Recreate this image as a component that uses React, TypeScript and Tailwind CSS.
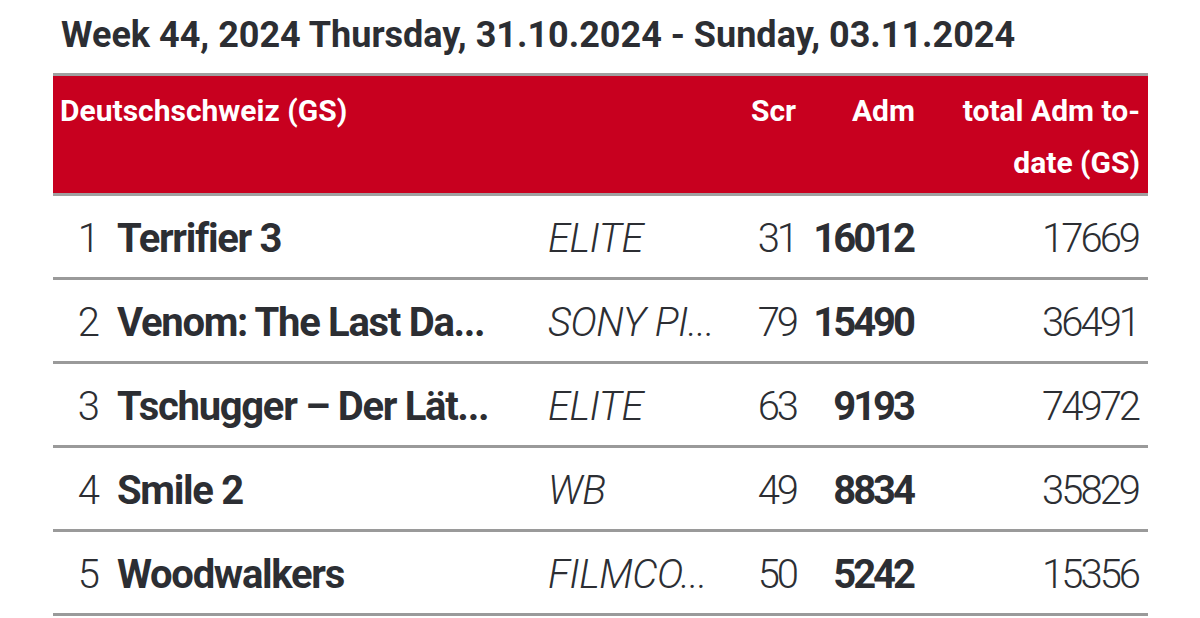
type Row = {
  rank: number;
  title: string;
  distributor: string;
  screens: number;
  admissions: number;
  total: number;
};

const rows: Row[] = [
  { rank: 1, title: "Terrifier 3", distributor: "ELITE", screens: 31, admissions: 16012, total: 17669 },
  { rank: 2, title: "Venom: The Last Da...", distributor: "SONY PI...", screens: 79, admissions: 15490, total: 36491 },
  { rank: 3, title: "Tschugger – Der Lät...", distributor: "ELITE", screens: 63, admissions: 9193, total: 74972 },
  { rank: 4, title: "Smile 2", distributor: "WB", screens: 49, admissions: 8834, total: 35829 },
  { rank: 5, title: "Woodwalkers", distributor: "FILMCO...", screens: 50, admissions: 5242, total: 15356 },
];

export default function App() {
  return (
    <div className="h-[618px] w-[1200px] overflow-hidden bg-white font-['Roboto','Liberation_Sans',sans-serif] text-[#2c2e33]">
      <h1 className="pl-[61px] pt-[13px] text-[36px] font-bold leading-[44px]">
        Week 44, 2024 Thursday, 31.10.2024 - Sunday, 03.11.2024
      </h1>

      <div className="ml-[53px] mt-[16px] w-[1095px]">
        {/* header */}
        <div className="flex h-[123px] border-y-[3px] border-[#a0a0a0] bg-[#c8001f] pt-[9px] text-[30px] font-bold leading-[52px] text-white">
          <div className="w-[667px] pl-[7px]">Deutschschweiz (GS)</div>
          <div className="w-[76px] text-right">Scr</div>
          <div className="w-[119px] text-right">Adm</div>
          <div className="w-[225px] text-right">
            total Adm to-
            <br />
            date (GS)
          </div>
        </div>

        {/* rows */}
        {rows.map((r) => (
          <div
            key={r.rank}
            className="flex h-[84px] items-center border-b-[3px] border-[#9a9a9a] pt-[5px] text-[40px]"
          >
            <div className="w-[47px] text-right font-light">{r.rank}</div>
            <div className="ml-[17px] w-[431px] whitespace-nowrap font-bold tracking-[-1.3px]">{r.title}</div>
            <div className="w-[172px] whitespace-nowrap font-light italic tracking-[-0.5px]">{r.distributor}</div>
            <div className="w-[76px] text-right font-light tracking-[-3px]">{r.screens}</div>
            <div className="w-[117px] text-right font-bold tracking-[-3px]">{r.admissions}</div>
            <div className="w-[227px] pr-[2px] text-right font-light tracking-[-3px]">{r.total}</div>
          </div>
        ))}
      </div>
    </div>
  );
}
